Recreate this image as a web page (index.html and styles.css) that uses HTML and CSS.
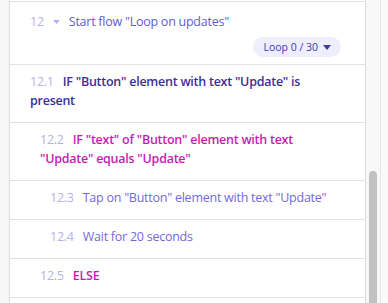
FILE: index.html
```html
<!DOCTYPE html>
<html>
<head>
  <title>Flow steps</title>
  <meta charset="UTF-8">
  <link rel="stylesheet" href="styles.css">
</head>
<body>
  <div class="frame">
    <div class="gutter"></div>

    <div class="panel">
      <div class="step-tail"></div>

      <!-- Start flow -->
      <div class="step step-flow">
        <div class="line">
          <span class="num">12</span>
          <svg class="caret" width="7" height="4" viewBox="0 0 7 4"><path d="M0 0h7L3.5 4z" fill="#b3b1ec"/></svg>
          <span class="flow-title">Start flow "Loop on updates"</span>
        </div>
        <div class="badge-row">
          <span class="loop-badge">Loop 0 / 30
            <svg width="8" height="5" viewBox="0 0 8 5"><path d="M0 0h8L4 5z" fill="#3d3bb3"/></svg>
          </span>
        </div>
      </div>

      <div class="step depth-0 cond-dark">
        <span class="num">12.1</span><span>IF "Button" element with text "Update" is present</span>
      </div>

      <div class="step depth-1 cond-pink">
        <span class="num">12.2</span><span>IF "text" of "Button" element with text "Update" equals "Update"</span>
      </div>

      <div class="step depth-2 action">
        <span class="num">12.3</span><span>Tap on "Button" element with text "Update"</span>
      </div>

      <div class="step depth-2 action">
        <span class="num">12.4</span><span>Wait for 20 seconds</span>
      </div>

      <div class="step depth-1 cond-pink">
        <span class="num">12.5</span><span>ELSE</span>
      </div>
    </div>

    <div class="scroll-track">
      <div class="scroll-space"></div>
      <div class="scroll-thumb"></div>
    </div>

    <div class="edge"></div>
  </div>
</body>
</html>
```

FILE: styles.css
```css
html, body {
  margin: 0;
  height: 100%;
  overflow: hidden;
}

body {
  font-family: 'Open Sans', 'Noto Sans', sans-serif;
  font-size: 12.5px;
  letter-spacing: -0.25px;
  background-color: #f7f7f8;
}

.frame {
  display: flex;
  height: 303px;
}

.gutter {
  width: 9px;
  flex: none;
}

.panel {
  width: 355px;
  flex: none;
  background: white;
  border-left: 1px solid #dedee2;
  border-right: 1px solid #dedee2;
  overflow: hidden;
}

.step-tail {
  height: 1px;
  border-bottom: 1px solid #e2e2e6;
}

.step {
  padding: 7px 30px 12px 20px;
  line-height: 19px;
  border-bottom: 1px solid #e2e2e6;
}

.num {
  color: #b4b2ea;
  font-weight: 400;
  margin-right: 9px;
}

/* start flow row */
.step-flow {
  padding-top: 10px;
  padding-bottom: 7px;
}

.line {
  display: flex;
  align-items: center;
}

.line .num {
  margin-right: 0;
}

.caret {
  margin: 0 9px 0 9px;
}

.flow-title {
  color: #5f5bd6;
}

.badge-row {
  display: flex;
  justify-content: flex-end;
  margin-top: 6px;
  margin-right: -6px;
}

.loop-badge {
  display: inline-flex;
  align-items: center;
  gap: 5px;
  background-color: #eeeefc;
  color: #3d3bb3;
  border-radius: 10px;
  height: 20px;
  padding: 0 10px;
  font-size: 10.5px;
  letter-spacing: 0;
}

.depth-0 { padding-left: 20px; }
.depth-1 { padding-left: 30px; }
.depth-2 { padding-left: 40px; }

.cond-dark {
  color: #3a2f98;
  font-weight: 600;
}

.cond-pink {
  color: #c71bb6;
  font-weight: 600;
}

.action {
  color: #716bd8;
}

.scroll-track {
  width: 14px;
  flex: none;
  display: flex;
  flex-direction: column;
  align-items: center;
  background: #f8f8f8;
}

.scroll-space {
  height: 171px;
  flex: none;
}

.scroll-thumb {
  width: 8px;
  flex: 1;
  background: #c1c1c1;
  border-radius: 4px 4px 0 0;
}

.edge {
  flex: 1;
  border-left: 1px solid #e6e6e6;
  background: #fafafa;
}
```
